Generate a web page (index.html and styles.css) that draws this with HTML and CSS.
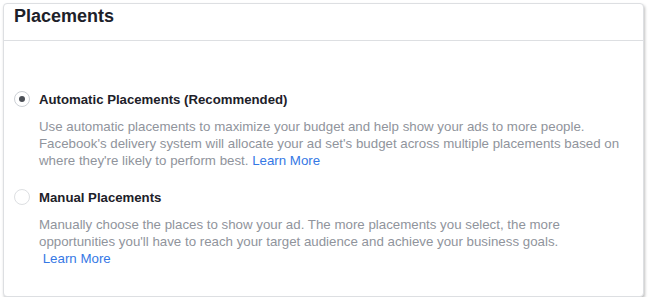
FILE: index.html
```html
<!DOCTYPE html>
<html lang="en">
<head>
  <meta charset="UTF-8" />
  <title>Placements</title>
  <link rel="stylesheet" href="styles.css">
</head>
<body>
  <div class="card">
    <div class="card-header">Placements</div>
    <div class="card-body">
      <div class="option">
        <div class="option-row">
          <span class="radio checked"></span>
          <span class="option-label">Automatic Placements (Recommended)</span>
        </div>
        <p class="option-desc">Use automatic placements to maximize your budget and help show your ads to more people. Facebook's delivery system will allocate your ad set's budget across multiple placements based on where they're likely to perform best. <a href="#">Learn More</a></p>
      </div>
      <div class="option">
        <div class="option-row">
          <span class="radio"></span>
          <span class="option-label">Manual Placements</span>
        </div>
        <p class="option-desc">Manually choose the places to show your ad. The more placements you select, the more opportunities you'll have to reach your target audience and achieve your business goals.<br>&nbsp;<a href="#">Learn More</a></p>
      </div>
    </div>
  </div>
</body>
</html>
```

FILE: styles.css
```css
body {
  margin: 0;
  padding: 3px 5px 0 3px;
  background: #fff;
  font-family: "Liberation Sans", Arial, sans-serif;
  color: #1d2129;
}

.card {
  border: 1px solid #dddfe2;
  border-radius: 4px;
  background: #fff;
  box-shadow: 1px 2px 3px rgba(0, 0, 0, 0.25);
  height: 294px;
  box-sizing: border-box;
}

.card-header {
  padding: 0 10px 12px;
  font-size: 18px;
  line-height: 24px;
  font-weight: bold;
  border-bottom: 1px solid #dddfe2;
}

.card-body {
  padding: 48px 18px 0 10px;
}

.option + .option {
  margin-top: 18px;
}

.option-row {
  display: flex;
  align-items: center;
  height: 20px;
}

.radio {
  width: 16px;
  height: 16px;
  box-sizing: border-box;
  border: 1px solid #dddfe2;
  border-radius: 50%;
  margin-right: 9px;
  display: flex;
  align-items: center;
  justify-content: center;
}

.radio.checked {
  border-color: #ccd0d5;
}

.radio.checked::after {
  content: "";
  width: 6px;
  height: 6px;
  border-radius: 50%;
  background: #4b4f56;
}

.option-label {
  font-size: 13.2px;
  font-weight: bold;
}

.option-desc {
  margin: 9px 0 0 25px;
  font-size: 13.3px;
  line-height: 17px;
  color: #90949c;
}

.option-desc a {
  color: #3578e5;
  text-decoration: none;
}
```
